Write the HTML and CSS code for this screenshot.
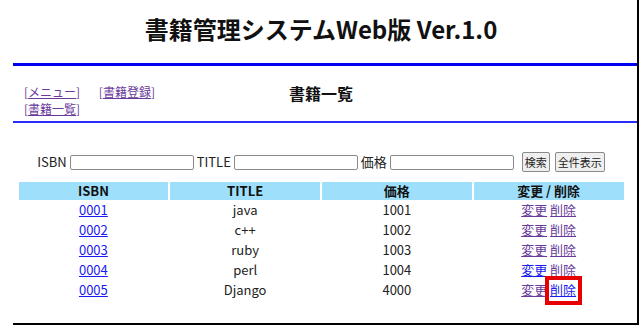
FILE: index.html
```html
<!DOCTYPE html>
<html lang="ja">
<head>
<meta charset="utf-8">
<title>書籍一覧</title>
<link rel="stylesheet" href="styles.css">
</head>
<body>
<div class="page">
  <div class="inner">
    <h1 class="title">書籍管理システムWeb版 Ver.1.0</h1>
    <div class="rule-thick"></div>
    <div class="navbar">
      <div class="nav">
        <span class="navitem">[<a class="visited" href="#">メニュー</a>]</span>
        <span class="navitem">[<a class="visited" href="#">書籍登録</a>]</span>
        <span class="navitem">[<a class="visited" href="#">書籍一覧</a>]</span>
      </div>
      <h2 class="heading">書籍一覧</h2>
      <div class="spacer"></div>
    </div>
    <div class="rule-thin"></div>
    <form class="search">
      <label class="lbl">ISBN</label><input class="field" type="text">
      <label class="lbl">TITLE</label><input class="field" type="text">
      <label class="lbl">価格</label><input class="field" type="text">
      <button class="btn" type="button">検索</button>
      <button class="btn" type="button">全件表示</button>
    </form>
    <table class="books">
      <thead>
        <tr><th>ISBN</th><th>TITLE</th><th>価格</th><th>変更 / 削除</th></tr>
      </thead>
      <tbody>
        <tr><td><a href="#">0001</a></td><td>java</td><td>1001</td><td><a class="visited" href="#">変更</a> <a class="visited" href="#">削除</a></td></tr>
        <tr><td><a href="#">0002</a></td><td>c++</td><td>1002</td><td><a class="visited" href="#">変更</a> <a class="visited" href="#">削除</a></td></tr>
        <tr><td><a href="#">0003</a></td><td>ruby</td><td>1003</td><td><a class="visited" href="#">変更</a> <a class="visited" href="#">削除</a></td></tr>
        <tr><td><a href="#">0004</a></td><td>perl</td><td>1004</td><td><a href="#">変更</a> <a class="visited" href="#">削除</a></td></tr>
        <tr><td><a href="#">0005</a></td><td>Django</td><td>4000</td><td><a class="visited" href="#">変更</a> <span class="mark"><a href="#">削除</a></span></td></tr>
      </tbody>
    </table>
  </div>
</div>
</body>
</html>
```
FILE: styles.css
```css
html, body {
  margin: 0;
  padding: 0;
  background: #fff;
}
body {
  font-family: "Noto Sans CJK JP", "Liberation Sans", sans-serif;
  font-size: 13px;
  color: #222;
}
a {
  color: #1a1aee;
  text-decoration: underline;
}
a.visited {
  color: #6a3a9a;
}
.page {
  margin-left: 13px;
  width: 624px;
  height: 323px;
  border-right: 2px solid #000;
  border-bottom: 2px solid #000;
}
.inner {
  padding-right: 8px;
  display: flex;
  flex-direction: column;
}
.title {
  margin: 0;
  padding-top: 15px;
  font-size: 24px;
  line-height: 28px;
  font-weight: bold;
  text-align: center;
  color: #111;
}
.rule-thick {
  margin-top: 20px;
  height: 3px;
  background: #0000f0;
  margin-right: -8px;
}
.rule-thin {
  margin-top: 4px;
  height: 2px;
  background: #2a2aff;
  margin-right: -8px;
}
.navbar {
  margin-top: 17px;
  display: grid;
  grid-template-columns: 1fr auto 1fr;
  align-items: start;
}
.nav {
  width: 150px;
  padding-left: 11px;
  font-size: 12px;
  line-height: 17px;
  color: #6a3a9a;
}
.navitem {
  margin-right: 16px;
  white-space: nowrap;
}
.heading {
  margin: 0;
  font-size: 16px;
  line-height: 20px;
  font-weight: bold;
  color: #111;
}
.search {
  margin: 29px 0 0;
  display: flex;
  justify-content: center;
  align-items: center;
  height: 20px;
}
.lbl {
  font-size: 13px;
  line-height: 16px;
  margin-right: 3px;
}
.field {
  width: 124px;
  height: 15px;
  box-sizing: border-box;
  border: 1px solid #8a8a8a;
  border-radius: 2px;
  padding: 0 2px;
  margin: 0 3px 0 0;
  font-size: 11px;
}
.btn {
  height: 20px;
  box-sizing: border-box;
  border: 1px solid #8a8a8a;
  border-radius: 2px;
  background: #efefef;
  font-family: "Noto Sans CJK JP", sans-serif;
  font-size: 11px;
  padding: 0 2px;
  margin-left: 5px;
  color: #222;
}
.books {
  margin: 8px auto 0;
  width: 609px;
  border-spacing: 2px;
  table-layout: fixed;
}
.books th {
  background: #9ee0fc;
  height: 18px;
  padding: 0;
  font-size: 13px;
  line-height: 18px;
  font-weight: bold;
  color: #111;
}
.books td {
  height: 18px;
  box-sizing: border-box;
  padding: 0 0 2px;
  text-align: center;
  font-size: 13px;
  line-height: 16px;
}
.mark {
  position: relative;
}
.mark::after {
  content: "";
  position: absolute;
  left: -5px;
  right: -6px;
  top: -4px;
  bottom: -6px;
  border: 4px solid #e60000;
}
```
